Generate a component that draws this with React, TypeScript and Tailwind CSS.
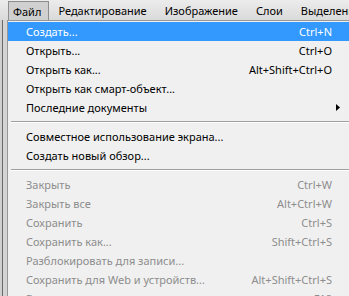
import { ReactNode } from 'react';

type Item = { label: string; shortcut?: string; disabled?: boolean; active?: boolean; submenu?: boolean };

const groups: Item[][] = [
    [
        { label: 'Создать...', shortcut: 'Ctrl+N', active: true },
        { label: 'Открыть...', shortcut: 'Ctrl+O' },
        { label: 'Открыть как...', shortcut: 'Alt+Shift+Ctrl+O' },
        { label: 'Открыть как смарт-объект...' },
        { label: 'Последние документы', submenu: true },
    ],
    [
        { label: 'Совместное использование экрана...' },
        { label: 'Создать новый обзор...' },
    ],
    [
        { label: 'Закрыть', shortcut: 'Ctrl+W', disabled: true },
        { label: 'Закрыть все', shortcut: 'Alt+Ctrl+W', disabled: true },
        { label: 'Сохранить', shortcut: 'Ctrl+S', disabled: true },
        { label: 'Сохранить как...', shortcut: 'Shift+Ctrl+S', disabled: true },
        { label: 'Разблокировать для записи...', disabled: true },
        { label: 'Сохранить для Web и устройств...', shortcut: 'Alt+Shift+Ctrl+S', disabled: true },
        { label: 'Вернуть', shortcut: 'F12', disabled: true },
    ],
];

function Row({ item }: { item: Item }) {
    const color = item.active ? 'text-white bg-[#3399ff]' : item.disabled ? 'text-[#8d8d8d]' : 'text-[#000]';
    return (
        <div className={`flex items-center h-[19px] pl-[18px] pr-[17px] ${color}`}>
            <span className="flex-1 whitespace-nowrap">{item.label}</span>
            {item.shortcut && <span className="whitespace-nowrap">{item.shortcut}</span>}
            {item.submenu && (
                <svg width="4" height="7" viewBox="0 0 4 7" className="mr-[-8px]">
                    <path d="M0 0 L4 3.5 L0 7 Z" fill="#000" />
                </svg>
            )}
        </div>
    );
}

function Separator() {
    return (
        <div className="h-[10px] flex flex-col justify-center pl-[3px]">
            <div className="h-px bg-[#a0a0a0]" />
            <div className="h-px bg-white" />
        </div>
    );
}

function MenuTab({ children, open }: { children: ReactNode; open?: boolean }) {
    return (
        <div
            className={
                open
                    ? 'h-[19px] mt-[1px] pl-[4px] pr-[7px] flex items-center border border-b-0 border-[#8e8e8e] bg-[#d0d0d0]'
                    : 'h-[19px] mt-[1px] px-[9px] flex items-center whitespace-nowrap'
            }
        >
            {children}
        </div>
    );
}

export default function App() {
    return (
        <div
            className="w-[349px] h-[296px] overflow-hidden bg-[#d6d6d6] text-[11px] leading-none"
            style={{ fontFamily: '"Noto Sans", "Open Sans", sans-serif' }}
        >
            {/* Menu bar */}
            <div className="h-[20px] flex items-start bg-gradient-to-b from-[#ececec] to-[#dadada] pl-[8px] text-[#000]">
                <MenuTab open>Файл</MenuTab>
                <div className="w-[2px]" />
                <MenuTab>Редактирование</MenuTab>
                <MenuTab>Изображение</MenuTab>
                <MenuTab>Слои</MenuTab>
                <MenuTab>Выделение</MenuTab>
            </div>

            <div className="flex h-[276px]">
                {/* Left strip */}
                <div className="w-[7px] flex bg-[#d4d4d4]">
                    <div className="w-[2px] bg-[#d0d0d0]" />
                    <div className="w-px bg-[#6a6a6a]" />
                </div>

                {/* Dropdown */}
                <div className="flex-1 bg-[#f0f0f0] border-l border-t border-[#979797] pt-[1px] overflow-hidden">
                    {groups.map((g, gi) => (
                        <div key={gi}>
                            {gi > 0 && <Separator />}
                            {g.map((item) => (
                                <Row key={item.label} item={item} />
                            ))}
                        </div>
                    ))}
                </div>
            </div>
        </div>
    );
}
